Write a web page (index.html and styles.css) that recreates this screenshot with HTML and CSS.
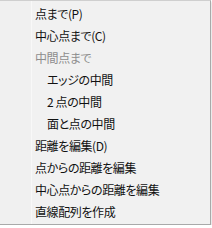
FILE: index.html
```html
<!DOCTYPE html>
<html lang="ja">
<head>
    <meta charset="UTF-8">
    <link rel="stylesheet" href="styles.css">
    <title>Menu</title>
</head>
<body>
    <div class="menu">
        <div class="item">点まで(P)</div>
        <div class="item">中心点まで(C)</div>
        <div class="item disabled">中間点まで</div>
        <div class="item sub">エッジの中間</div>
        <div class="item sub">2 点の中間</div>
        <div class="item sub">面と点の中間</div>
        <div class="item">距離を編集(D)</div>
        <div class="item">点からの距離を編集</div>
        <div class="item">中心点からの距離を編集</div>
        <div class="item">直線配列を作成</div>
    </div>
</body>
</html>
```

FILE: styles.css
```css
body {
    margin: 0;
    background: #ffffff;
    font-family: "Noto Sans CJK JP", "Noto Sans", sans-serif;
}

.menu {
    width: 210px;
    padding: 2px 0 1px 0;
    background: linear-gradient(to right, #f0f0f0 31px, #f8f8f8 31px, #f8f8f8 32px, #f1f1f1 32px);
    border-top: 1px solid #cfcfcf;
    border-right: 1px solid #a9a9a9;
    border-bottom: 1px solid #a9a9a9;
    box-shadow: 0 2px 2px rgba(0, 0, 0, 0.25);
}

.item {
    height: 22px;
    line-height: 22px;
    padding-left: 35px;
    font-size: 12px;
    letter-spacing: -0.4px;
    color: #111;
    font-feature-settings: "palt";
    white-space: nowrap;
}

.sub {
    padding-left: 47px;
}

.disabled {
    color: #8d8d8d;
}
```
